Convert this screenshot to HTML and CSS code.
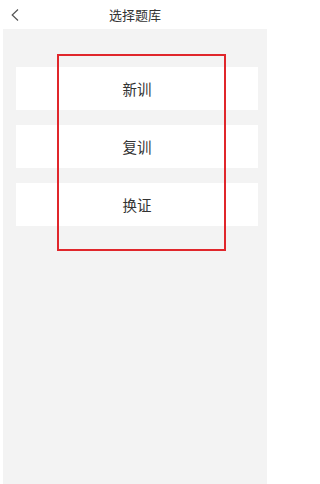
FILE: index.html
```html
<!DOCTYPE html>
<html lang="zh">
<head>
<meta charset="utf-8">
<link rel="stylesheet" href="styles.css">
</head>
<body>
<div class="app">
  <header class="topbar">
    <span class="back">
      <svg width="8" height="12" viewBox="0 0 8 12"><path d="M7 0.5 L1.2 6 L7 11.5" fill="none" stroke="#555" stroke-width="1.2"/></svg>
    </span>
    <h1 class="title">选择题库</h1>
  </header>
  <main class="panel">
    <div class="list">
      <div class="item">新训</div>
      <div class="item">复训</div>
      <div class="item">换证</div>
    </div>
    <div class="highlight"></div>
  </main>
</div>
</body>
</html>
```
FILE: styles.css
```css
html, body {
  margin: 0;
  padding: 0;
  background: #ffffff;
}
body {
  font-family: "Noto Sans CJK SC", "Noto Sans", sans-serif;
  color: #333;
}
.app {
  width: 270px;
  height: 484px;
  display: flex;
  flex-direction: column;
}
.topbar {
  height: 29px;
  position: relative;
  display: flex;
  align-items: center;
  justify-content: center;
  flex-shrink: 0;
}
.back {
  position: absolute;
  left: 11px;
  top: 9px;
  display: block;
  line-height: 0;
}
.title {
  margin: 0;
  font-size: 13px;
  font-weight: normal;
  color: #333;
  line-height: 1;
}
.panel {
  position: relative;
  flex: 1;
  margin: 0 3px;
  background: #f3f3f3;
  padding: 38px 9px 0 13px;
}
.list {
  display: flex;
  flex-direction: column;
  gap: 15px;
}
.item {
  height: 43px;
  background: #ffffff;
  display: flex;
  align-items: center;
  justify-content: center;
  font-size: 14.5px;
  color: #333;
}
.highlight {
  position: absolute;
  left: 54px;
  top: 25px;
  width: 165px;
  height: 193px;
  border: 2px solid #e0262b;
}
```
